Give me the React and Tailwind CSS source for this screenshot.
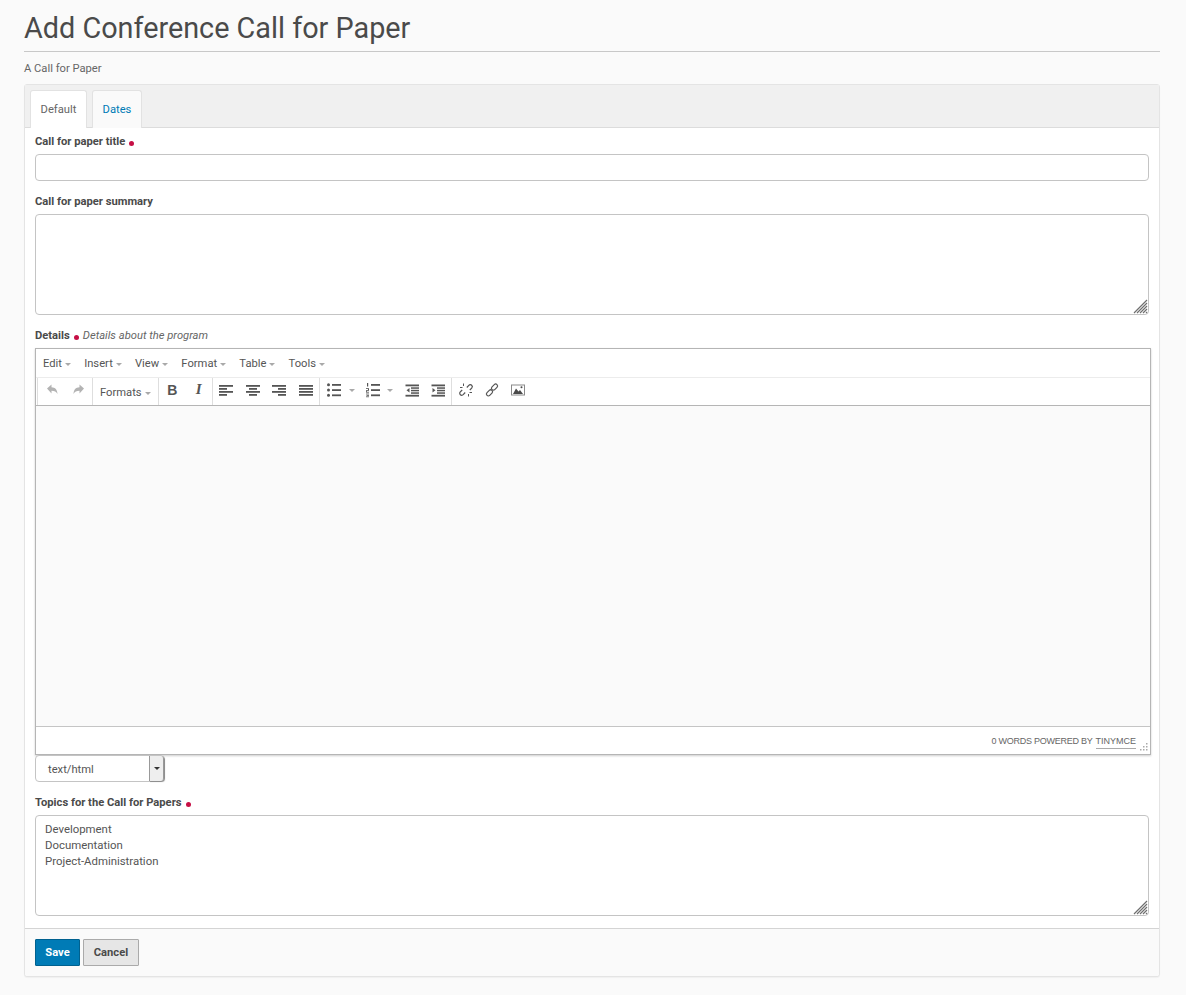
import React from 'react'

const MENUS = ['Edit', 'Insert', 'View', 'Format', 'Table', 'Tools']
const ICON = 'w-4 h-4 text-[#555] fill-current'

function Caret({ className = '' }) {
  return <span className={`inline-block w-0 h-0 border-x-[3px] border-x-transparent border-t-[3px] border-t-[#a9a9a9] ${className}`} />
}

function Dot() {
  return <span className="inline-block w-[5px] h-[5px] rounded-full bg-[#c60f45] ml-[4px] relative top-[1px]" />
}

function Lines({ rows }) {
  return (
    <svg className={ICON} viewBox="0 0 16 16">
      {rows.map(([x, y, w, h = 1.8], i) => <rect key={i} x={x} y={y} width={w} height={h} />)}
    </svg>
  )
}

function ToolBtn({ children, className = 'w-[26.5px]' }) {
  return <span className={`flex items-center justify-center h-full pb-[4px] ${className}`}>{children}</span>
}

function Sep() {
  return <span className="w-px h-full bg-[#dedede]" />
}

function Toolbar() {
  return (
    <div className="flex items-center h-[29px] pl-[1px] border-y border-t-[#ececec] border-b-[#b5b5b5] bg-white">
      <Sep />
      <ToolBtn className="w-[27px]"><svg className="w-4 h-4 text-[#b3b3b3] fill-current" viewBox="0 0 16 16"><path d="M3 6.500 7.500 2.500v2.700c3.800.2 5.800 2.500 6 6.800-1.200-2.300-3-3.300-6-3.300v2.800z" /></svg></ToolBtn>
      <ToolBtn className="w-[27px]"><svg className="w-4 h-4 text-[#b3b3b3] fill-current" viewBox="0 0 16 16"><path d="M13 6.500 8.500 2.500v2.700c-3.800.2-5.800 2.500-6 6.800 1.200-2.300 3-3.300 6-3.300v2.800z" /></svg></ToolBtn>
      <Sep />
      <span className="flex items-center gap-[3px] pl-[7px] w-[65px] h-full pt-[3px] text-[11.2px] text-[#555]">Formats<Caret /></span>
      <Sep />
      <ToolBtn><span className="font-['Liberation_Sans',sans-serif] font-bold text-[14px] text-[#555] leading-none">B</span></ToolBtn>
      <ToolBtn><span className="font-['Liberation_Serif',serif] italic font-bold text-[15px] text-[#555] leading-none">I</span></ToolBtn>
      <Sep />
      <ToolBtn><Lines rows={[[1, 3, 14], [1, 6, 8], [1, 9, 14], [1, 12, 8]]} /></ToolBtn>
      <ToolBtn><Lines rows={[[1, 3, 14], [4, 6, 8], [1, 9, 14], [4, 12, 8]]} /></ToolBtn>
      <ToolBtn><Lines rows={[[1, 3, 14], [7, 6, 8], [1, 9, 14], [7, 12, 8]]} /></ToolBtn>
      <ToolBtn><Lines rows={[[1, 3, 14], [1, 6, 14], [1, 9, 14], [1, 12, 14]]} /></ToolBtn>
      <Sep />
      <ToolBtn className="w-[28px]">
        <svg className={ICON} viewBox="0 0 16 16">
          <circle cx="2.500" cy="2.800" r="1.500" /><circle cx="2.500" cy="8" r="1.500" /><circle cx="2.500" cy="13.200" r="1.500" />
          <rect x="6" y="2" width="9" height="1.800" /><rect x="6" y="7.200" width="9" height="1.800" /><rect x="6" y="12.400" width="9" height="1.800" />
        </svg>
      </ToolBtn>
      <span className="flex items-center pl-[1px] pb-[2px] w-[12px] h-full"><Caret className="border-t-[#a8b0b8]" /></span>
      <ToolBtn className="w-[26px]">
        <svg className={ICON} viewBox="0 0 16 16">
          <rect x="2" y="1" width="1.200" height="3.500" />
          <rect x="1" y="6.200" width="3" height="0.800" /><rect x="3" y="7" width="1" height="1" /><rect x="1" y="8" width="3" height="0.800" /><rect x="1" y="9" width="1" height="0.800" /><rect x="1" y="9.800" width="3" height="0.800" />
          <rect x="1" y="11.600" width="3" height="0.800" /><rect x="1.500" y="13" width="2.500" height="0.800" /><rect x="1" y="14.400" width="3" height="0.800" />
          <rect x="6" y="2" width="9" height="1.800" /><rect x="6" y="7.200" width="9" height="1.800" /><rect x="6" y="12.400" width="9" height="1.800" />
        </svg>
      </ToolBtn>
      <span className="flex items-center pl-[1px] pb-[2px] w-[13px] h-full"><Caret className="border-t-[#a8b0b8]" /></span>
      <ToolBtn className="w-[26px]">
        <svg className={ICON} viewBox="0 0 16 16">
          <rect x="1.500" y="2.500" width="13.500" height="1.800" /><rect x="7" y="5.300" width="8" height="1.500" /><rect x="7" y="7.800" width="8" height="1.500" /><rect x="7" y="10.300" width="8" height="1.500" /><rect x="1.500" y="12.800" width="13.500" height="1.800" />
          <path d="M5.500 6v4.500L2.500 8.200z" />
        </svg>
      </ToolBtn>
      <ToolBtn className="w-[26px]">
        <svg className={ICON} viewBox="0 0 16 16">
          <rect x="1.500" y="2.500" width="13.500" height="1.800" /><rect x="7" y="5.300" width="8" height="1.500" /><rect x="7" y="7.800" width="8" height="1.500" /><rect x="7" y="10.300" width="8" height="1.500" /><rect x="1.500" y="12.800" width="13.500" height="1.800" />
          <path d="M2.500 6v4.500l3-2.300z" />
        </svg>
      </ToolBtn>
      <Sep />
      <ToolBtn className="w-[27px]">
        <svg className="w-4 h-4 text-[#555]" viewBox="0 0 16 16" fill="none" stroke="currentColor" strokeWidth="1.200">
          <path d="M8.800 5.500 10.800 3.300a2 2 0 0 1 2.900 2.800L11.800 8" />
          <path d="M7.200 10.500 5.200 12.700a2 2 0 0 1-2.900-2.800L4.200 8" />
          <path d="M5.500 1.500v2.500M2 5.500h2.500M10.500 12v2.500M11.500 10.500H14" strokeWidth="1" />
        </svg>
      </ToolBtn>
      <ToolBtn className="w-[25px]">
        <svg className="w-4 h-4 text-[#555]" viewBox="0 0 16 16" fill="none" stroke="currentColor" strokeWidth="1.200">
          <rect x="7" y="3.200" width="7" height="3.800" rx="1.900" transform="rotate(-45 10.500 5.100)" />
          <rect x="2" y="9" width="7" height="3.800" rx="1.900" transform="rotate(-45 5.500 10.900)" />
        </svg>
      </ToolBtn>
      <ToolBtn className="w-[27px]">
        <svg className="w-4 h-4" viewBox="0 0 16 16">
          <rect x="1.500" y="3" width="13" height="10" fill="none" stroke="#8a8a8a" strokeWidth="1" />
          <path d="M3 12 6 6.500l2.500 3L10 8l3 4z" fill="#4a4a4a" />
          <circle cx="11.500" cy="5.300" r="1" fill="#4a4a4a" />
        </svg>
      </ToolBtn>
    </div>
  )
}

function Editor() {
  return (
    <div className="w-[1116px] h-[407px] flex flex-col border border-[#b5b5b5] shadow-[0_1px_2px_rgba(0,0,0,0.2)] bg-white">
      <div className="flex items-center h-[28px] pt-[3px] pl-[7px] text-[11.2px] text-[#555]">
        {MENUS.map(m => (
          <span key={m} className="flex items-center gap-[3px] mr-[13.200px]">{m}<Caret /></span>
        ))}
      </div>
      <Toolbar />
      <div className="flex-1 bg-[#fafafa]" />
      <div className="relative flex items-center justify-end h-[28px] pt-[3px] pr-[14px] border-t border-[#c5c5c5] font-['Liberation_Sans',sans-serif] text-[9px] text-[#666]">
        <span className="tracking-[-0.25px]">0 WORDS POWERED BY</span>
        <span className="ml-[3px] border-b border-[#aaa] leading-[13px]">TINYMCE</span>
        <svg className="absolute right-[2px] bottom-[3px] w-[8px] h-[8px] text-[#aaa] fill-current" viewBox="0 0 8 8">
          <rect x="6" y="0" width="1.500" height="1.500" /><rect x="3" y="3" width="1.500" height="1.500" /><rect x="6" y="3" width="1.500" height="1.500" />
          <rect x="0" y="6" width="1.500" height="1.500" /><rect x="3" y="6" width="1.500" height="1.500" /><rect x="6" y="6" width="1.500" height="1.500" />
        </svg>
      </div>
    </div>
  )
}

function Label({ children, required, hint }) {
  return (
    <div className="flex items-center h-[16px] text-[11.2px] text-[#4a4a4a]">
      <span className="font-bold">{children}</span>
      {required && <Dot />}
      {hint && <em className="ml-[4px] text-[#666]">{hint}</em>}
    </div>
  )
}

function AreaField({ className = '', ...props }) {
  return (
    <div className="relative w-[1114px] mt-[4px]">
      <textarea className={`block w-full h-[101px] resize-none rounded-[4px] border border-[#c4c4c4] bg-white outline-none ${className}`} {...props} />
      <svg className="absolute right-[1px] bottom-[1px] w-[15px] h-[15px] text-[#6f6f6f]" viewBox="0 0 15 15" stroke="currentColor" strokeWidth="1.200">
        <path d="M1 14 14 1M4 14 14 4M7 14l7-7M10 14l4-4M13 14l1-1" />
      </svg>
    </div>
  )
}

export default function App() {
  return (
    <div className="min-h-[995px] bg-[#fafafa] pl-[24px] pr-[26px] font-['Roboto',sans-serif] text-[#4a4a4a]">
      <header className="pt-[10px]">
        <h1 className="h-[42px] text-[28.8px] leading-[37px] text-[#4a4a4a] border-b border-[#c8c8c8]">Add Conference Call for Paper</h1>
        <p className="mt-[9px] text-[11.2px] leading-[16px] text-[#666]">A Call for Paper</p>
      </header>

      <div className="mt-[7px] rounded-[3px] border border-[#e4e4e4] bg-white shadow-[0_1px_1px_rgba(0,0,0,0.04)]">
        <div className="flex items-end gap-[5px] h-[43px] pl-[5px] bg-[#f0f0f0] border-b border-[#dcdcdc]">
          <a className="flex items-center justify-center w-[57px] h-[38px] pt-[1px] -mb-px rounded-t-[3px] border border-b-0 border-[#e2e2e2] bg-white text-[11.2px] text-[#666]">Default</a>
          <a className="flex items-center justify-center w-[50px] h-[38px] pt-[1px] -mb-px rounded-t-[3px] border border-b-0 border-[#e2e2e2] bg-[#fafafa] text-[11.2px] text-[#007bb6]">Dates</a>
        </div>

        <div className="pl-[10px] pt-[6px] pb-[12px] border-b border-[#d4d4d4]">
          <Label required>Call for paper title</Label>
          <input className="block w-[1114px] h-[27px] mt-[4px] rounded-[4px] border border-[#c4c4c4] bg-white outline-none" />

          <div className="mt-[13px]"><Label>Call for paper summary</Label></div>
          <AreaField />

          <div className="mt-[13px]"><Label required hint="Details about the program">Details</Label></div>
          <div className="mt-[4px]"><Editor /></div>

          <div className="flex items-stretch w-[130px] h-[27px] rounded-[4px] border border-[#c4c4c4] bg-white text-[11.2px] text-[#555]">
            <span className="flex-1 flex items-center pl-[12px] pt-[3px]">text/html</span>
            <span className="flex items-center justify-center w-[15px] bg-[#eeeeee] border-x border-[#999] rounded-r-[3px] shadow-[1px_1px_1px_rgba(0,0,0,0.3)]">
              <span className="w-0 h-0 border-x-[3px] border-x-transparent border-t-[3px] border-t-[#333]" />
            </span>
          </div>

          <div className="mt-[13px]"><Label required>Topics for the Call for Papers</Label></div>
          <AreaField
            className="pl-[9px] pt-[5px] text-[11.4px] leading-[16px] text-[#555]"
            defaultValue={'Development\nDocumentation\nProject-Administration'}
          />
        </div>

        <div className="flex gap-[3px] pl-[10px] pt-[10px] pb-[10px] bg-[#fafafa] rounded-b-[3px]">
          <button className="w-[45px] h-[27px] pt-[1px] rounded-[1px] border border-[#00618f] bg-[#007bb6] text-[11.2px] font-bold text-white">Save</button>
          <button className="w-[56px] h-[27px] pt-[1px] rounded-[1px] border border-[#aaa] bg-[#e6e6e6] text-[11.2px] font-bold text-[#4a4a4a]">Cancel</button>
        </div>
      </div>
    </div>
  )
}
